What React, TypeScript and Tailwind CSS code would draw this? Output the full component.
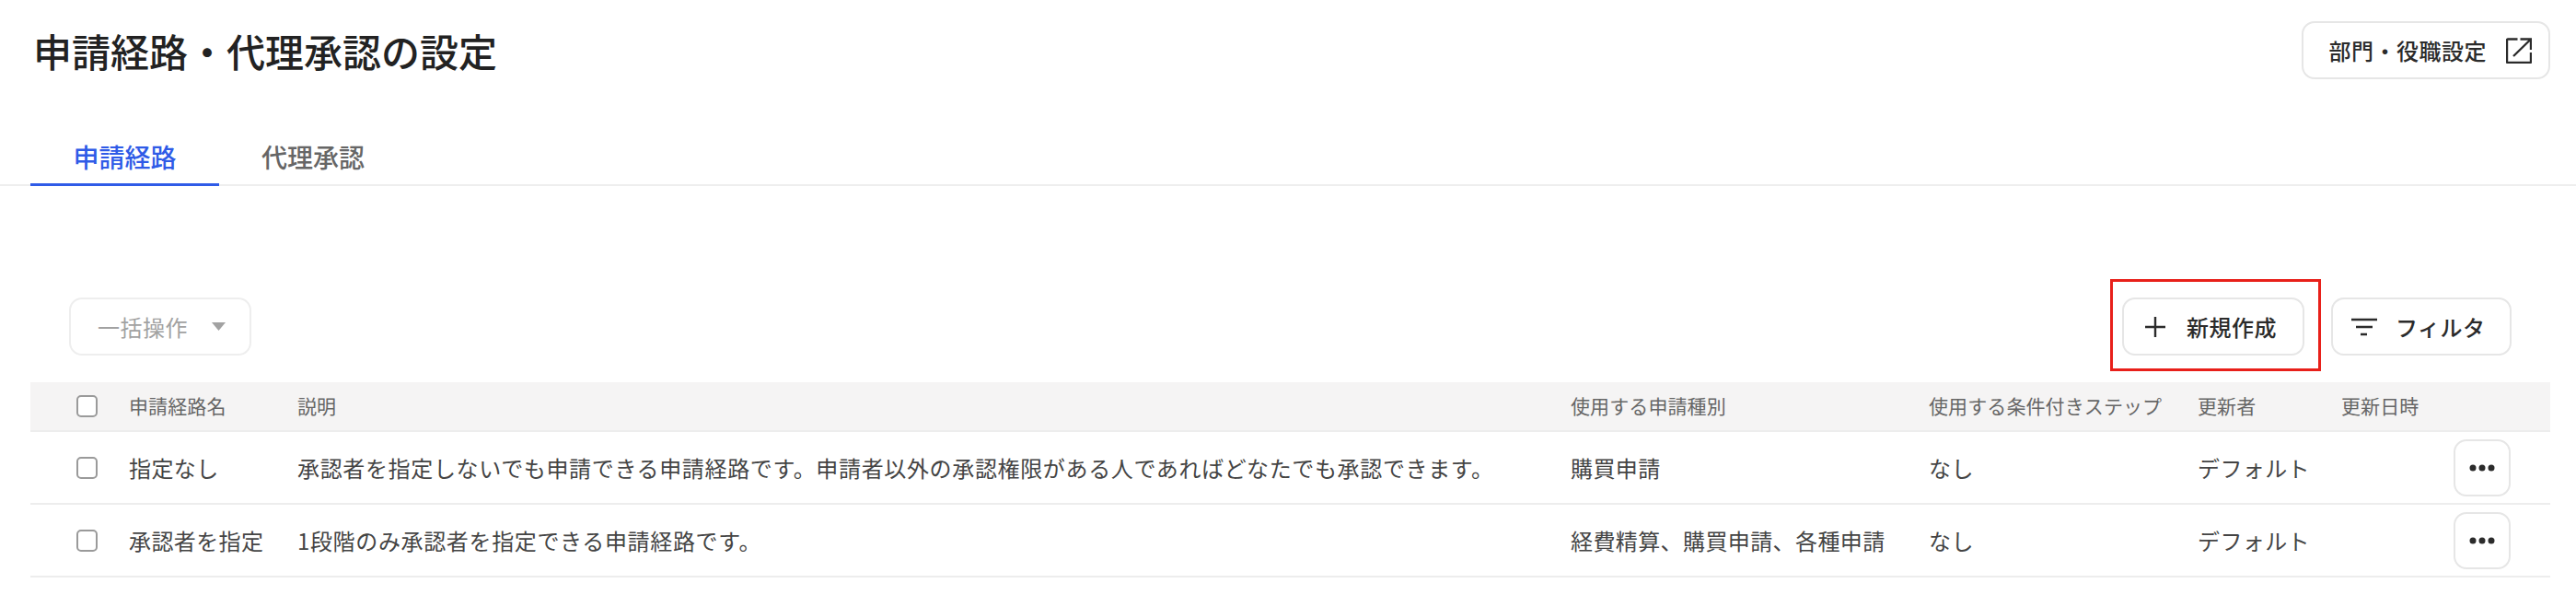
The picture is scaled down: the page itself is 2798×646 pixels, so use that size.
const font = { fontFamily: '"Noto Sans CJK JP", "Noto Sans", sans-serif' };

function Checkbox() {
  return <span className="block h-[24px] w-[23px] rounded-[5px] border-2 border-[#9a9a9a] bg-white" />;
}

function Btn({ className, children }: { className: string; children: React.ReactNode }) {
  return (
    <button className={`flex h-[63px] items-center rounded-[14px] border-2 border-[#e6e6e6] bg-white text-[24px] font-medium tracking-[0.5px] text-[#2b2b2b] ${className}`}>
      {children}
    </button>
  );
}

const cols = "grid grid-cols-[107px_183px_1383px_389px_292px_156px_1fr] items-center";

const rows = [
  {
    name: "指定なし",
    desc: "承認者を指定しないでも申請できる申請経路です。申請者以外の承認権限がある人であればどなたでも承認できます。",
    kinds: "購買申請",
  },
  {
    name: "承認者を指定",
    desc: "1段階のみ承認者を指定できる申請経路です。",
    kinds: "経費精算、購買申請、各種申請",
  },
];

export default function App() {
  return (
    <div className="h-[646px] w-[2798px] overflow-hidden bg-white" style={font}>
      <div className="flex items-start justify-between pl-[36px] pr-[28px] pt-[23px]">
        <h1 className="mt-[3px] text-[42px] font-medium leading-[58px] text-[#222222]">申請経路・代理承認の設定</h1>
        <Btn className="pl-[28px] pr-[18px]">
          <span>部門・役職設定</span>
          <svg className="ml-[21px]" width="28" height="28" viewBox="0 0 28 28" fill="none" stroke="#2b2b2b" strokeWidth="2.4">
            <path d="M12.500 1.500H2a1 1 0 0 0-1 1v23.500a1 1 0 0 0 1 1h24a1 1 0 0 0 1-1V16" />
            <path d="M15.500 1.500H27V13M26.500 2 8 20" />
          </svg>
        </Btn>
      </div>

      <div className="mt-[34px] flex h-[82px] border-b-2 border-[#eeeeee] pl-[33px]" />
      <div className="-mt-[82px] flex h-[82px] pl-[33px]">
        <div className="flex h-[82px] w-[205px] items-center justify-center border-b-[3px] border-[#2f5be7] pt-[21px] text-[28px] font-medium text-[#2f5be7]">
          申請経路
        </div>
        <div className="flex h-[82px] w-[204px] items-center justify-center pb-[3px] pt-[21px] text-[28px] font-medium text-[#666666]">
          代理承認
        </div>
      </div>

      <div className="mt-[121px] flex items-center justify-between pl-[75px] pr-[70px]">
        <button className="flex h-[63px] w-[198px] items-center rounded-[14px] border-2 border-[#eeeeee] bg-white pl-[29px] text-[24px] tracking-[0.5px] text-[#a2a2a2]">
          <span>一括操作</span>
          <svg className="ml-[26px]" width="15" height="9" viewBox="0 0 15 9">
            <path d="M0 0h15L7.500 9z" fill="#a2a2a2" />
          </svg>
        </button>
        <div className="flex gap-[29px]">
          <Btn className="w-[198px] pl-[23px]">
            <svg width="22" height="22" viewBox="0 0 22 22" stroke="#2b2b2b" strokeWidth="2.4">
              <path d="M11 0v22M0 11h22" />
            </svg>
            <span className="ml-[23px]">新規作成</span>
          </Btn>
          <Btn className="w-[196px] pl-[20px]">
            <svg width="28" height="20" viewBox="0 0 28 20" stroke="#2b2b2b" strokeWidth="2.4">
              <path d="M0 2h28M5 10h18M10 18h7" />
            </svg>
            <span className="ml-[20px]">フィルタ</span>
          </Btn>
        </div>
      </div>

      <div className="ml-[33px] mt-[29px] w-[2737px]">
        <div className={`${cols} h-[54px] border-b-2 border-[#ededed] bg-[#f5f4f4] text-[21px] tracking-[0.1px] text-[#666666]`}>
          <div className="pl-[50px]"><Checkbox /></div>
          <div>申請経路名</div>
          <div>説明</div>
          <div>使用する申請種別</div>
          <div>使用する条件付きステップ</div>
          <div>更新者</div>
          <div>更新日時</div>
        </div>
        {rows.map((r) => (
          <div key={r.name} className={`${cols} h-[79px] border-b-2 border-[#ededed] text-[24px] tracking-[0.4px] text-[#444444]`}>
            <div className="pl-[50px]"><Checkbox /></div>
            <div>{r.name}</div>
            <div className="tracking-[0.65px]">{r.desc}</div>
            <div>{r.kinds}</div>
            <div>なし</div>
            <div>デフォルト</div>
            <div className="flex justify-end pr-[43px]">
              <button className="flex h-[62px] w-[62px] items-center justify-center rounded-[14px] border-2 border-[#e6e6e6] bg-white">
                <svg width="28" height="8" viewBox="0 0 28 8" fill="#2b2b2b">
                  <circle cx="4" cy="4" r="3.500" />
                  <circle cx="14" cy="4" r="3.500" />
                  <circle cx="24" cy="4" r="3.500" />
                </svg>
              </button>
            </div>
          </div>
        ))}
      </div>

      <div className="pointer-events-none absolute left-[2292px] top-[303px] h-[100px] w-[229px] border-[3px] border-[#e8201a]" />
    </div>
  );
}
